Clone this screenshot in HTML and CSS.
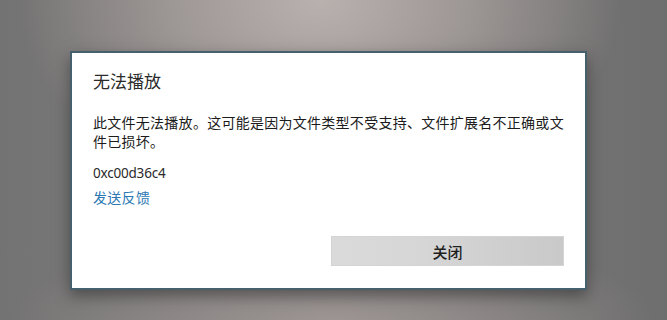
FILE: index.html
```html
<!DOCTYPE html>
<html lang="zh-CN">
<head>
    <meta charset="UTF-8">
    <meta name="viewport" content="width=device-width, initial-scale=1.0">
    <title>无法播放</title>
    <link rel="stylesheet" href="styles.css">
</head>
<body>
    <div class="dialog">
        <h1 class="title">无法播放</h1>
        <p class="message">此文件无法播放。这可能是因为文件类型不受支持、文件扩展名不正确或文件已损坏。</p>
        <p class="code">0xc00d36c4</p>
        <a class="feedback" href="#">发送反馈</a>
        <div class="actions">
            <button class="close">关闭</button>
        </div>
    </div>
</body>
</html>
```

FILE: styles.css
```css
html, body {
    margin: 0;
    height: 320px;
    overflow: hidden;
}
body {
    font-family: "Noto Sans", "Noto Sans CJK SC", sans-serif;
    background:
        radial-gradient(ellipse 300px 210px at 48% 0%, rgba(188,180,177,0.95) 0%, rgba(172,164,161,0.75) 45%, rgba(120,118,118,0) 100%),
        radial-gradient(ellipse 320px 90px at 50% 100%, rgba(160,152,150,0.9) 0%, rgba(120,118,118,0) 100%),
        linear-gradient(90deg, #747373 0%, #7d7b7b 30%, #7a7878 70%, #6e6e6e 100%);
}
.dialog {
    box-sizing: border-box;
    width: 517px;
    height: 239px;
    margin: 51px 0 0 70px;
    padding: 17px 21px 0 21px;
    background: #fff;
    border: 2px solid #46606e;
    box-shadow: 0 6px 14px rgba(30,30,30,0.5);
    display: flex;
    flex-direction: column;
    align-items: flex-start;
}
.title {
    margin: 0;
    font-size: 17px;
    font-weight: normal;
    line-height: 24px;
    color: #2a2a2a;
}
.message {
    margin: 19px 0 0 0;
    width: 472px;
    font-size: 14px;
    letter-spacing: 0.27px;
    line-height: 19px;
    color: #1b1b1b;
}
.code {
    margin: 12px 0 0 0;
    font-size: 13.5px;
    letter-spacing: -0.2px;
    line-height: 20px;
    color: #2a2a2a;
}
.feedback {
    margin-top: 5px;
    font-size: 14px;
    letter-spacing: 0.3px;
    line-height: 20px;
    color: #2b78b3;
    text-decoration: none;
}
.actions {
    align-self: stretch;
    display: flex;
    justify-content: flex-end;
    margin-top: 28px;
}
.close {
    width: 233px;
    height: 30px;
    border: 1px solid #d4d4d4;
    background: linear-gradient(90deg, #dadada 0%, #d6d6d6 40%, #c9c9c9 100%);
    font-family: "Noto Sans", "Noto Sans CJK SC", sans-serif;
    font-size: 15px;
    font-weight: 500;
    color: #1e1e1e;
    padding: 0;
}
```
